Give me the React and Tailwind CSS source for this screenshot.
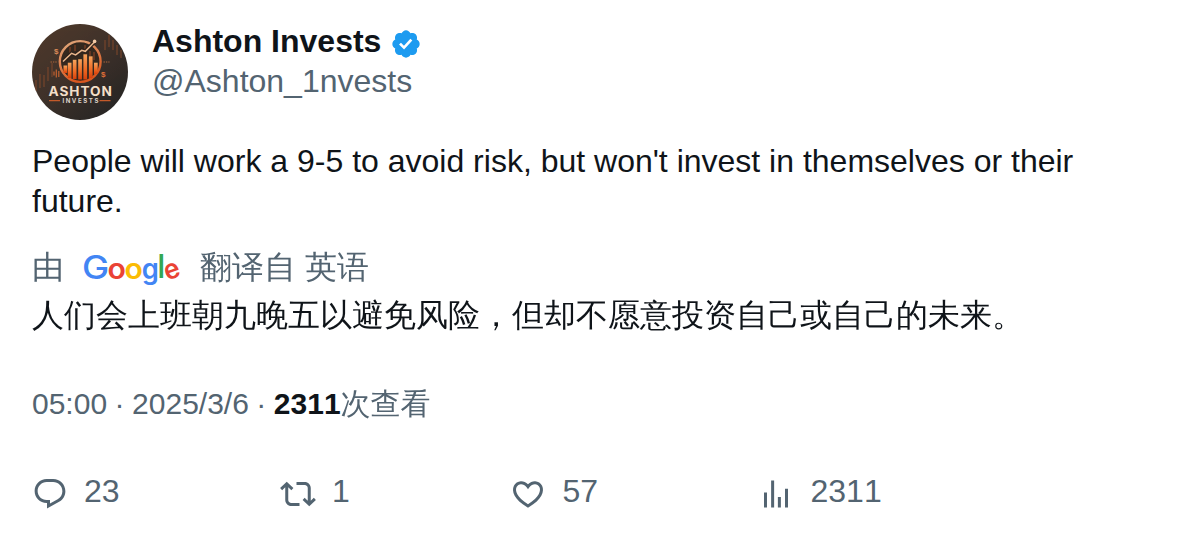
const REPLY =
  "M1.751 10c0-4.42 3.584-8 8.005-8h4.366c4.49 0 8.129 3.64 8.129 8.13 0 2.96-1.607 5.68-4.196 7.11l-8.054 4.46v-3.69h-.067c-4.49.1-8.183-3.51-8.183-8.01zm8.005-6c-3.317 0-6.005 2.69-6.005 6 0 3.37 2.77 6.08 6.138 6.01l.351-.01h1.761v2.3l5.087-2.81c1.951-1.08 3.163-3.13 3.163-5.36 0-3.39-2.744-6.13-6.129-6.13H9.756z";
const REPOST =
  "M4.5 3.88l4.432 4.14-1.364 1.46L5.5 7.55V16c0 1.1.896 2 2 2H13v2H7.5c-2.209 0-4-1.79-4-4V7.55L1.432 9.48.068 8.02 4.5 3.88zM16.5 6H11V4h5.5c2.209 0 4 1.79 4 4v8.45l2.068-1.93 1.364 1.46-4.432 4.14-4.432-4.14 1.364-1.46 2.068 1.93V8c0-1.1-.896-2-2-2z";
const LIKE =
  "M16.697 5.5c-1.222-.06-2.679.51-3.89 2.16l-.805 1.09-.806-1.09C9.984 6.01 8.526 5.44 7.304 5.5c-1.243.07-2.349.78-2.91 1.91-.552 1.12-.633 2.78.479 4.82 1.074 1.97 3.257 4.27 7.129 6.61 3.87-2.34 6.052-4.64 7.126-6.61 1.111-2.04 1.03-3.7.477-4.82-.561-1.13-1.666-1.84-2.908-1.91zm4.187 7.69c-1.351 2.48-4.001 5.12-8.379 7.67l-.503.3-.504-.3c-4.379-2.55-7.029-5.19-8.382-7.67-1.36-2.5-1.41-4.86-.514-6.67.887-1.79 2.647-2.91 4.601-3.01 1.651-.09 3.368.56 4.798 2.01 1.429-1.45 3.146-2.1 4.796-2.01 1.954.1 3.714 1.22 4.601 3.01.896 1.81.846 4.17-.514 6.67z";
const VIEWS =
  "M8.75 21V3h2v18h-2zM18 21V8.5h2V21h-2zM4 21l.004-10h2L6 21H4zm9.248 0v-7h2v7h-2z";
const VERIFIED =
  "M20.396 11c-.018-.646-.215-1.275-.57-1.816-.354-.54-.852-.972-1.438-1.246.223-.607.27-1.264.14-1.897-.131-.634-.437-1.218-.882-1.687-.47-.445-1.053-.75-1.687-.882-.633-.13-1.29-.083-1.897.14-.273-.587-.704-1.086-1.245-1.44S11.647 1.62 11 1.604c-.646.017-1.273.213-1.813.568s-.969.854-1.24 1.44c-.608-.223-1.267-.272-1.902-.14-.635.13-1.22.436-1.69.882-.445.47-.749 1.055-.878 1.688-.13.633-.08 1.29.144 1.896-.587.274-1.087.705-1.443 1.245-.356.54-.555 1.17-.574 1.817.02.647.218 1.276.574 1.817.356.54.856.972 1.443 1.245-.224.606-.274 1.263-.144 1.896.13.634.433 1.218.877 1.688.47.443 1.054.747 1.687.878.633.132 1.29.084 1.897-.136.274.586.705 1.084 1.246 1.439.54.354 1.17.551 1.816.569.647-.016 1.276-.213 1.817-.567s.972-.854 1.245-1.44c.604.239 1.266.296 1.903.164.636-.132 1.22-.447 1.68-.907.46-.46.776-1.044.908-1.681s.075-1.299-.165-1.903c.586-.274 1.084-.705 1.439-1.246.354-.54.551-1.17.569-1.816zM9.662 14.85l-3.429-3.428 1.293-1.302 2.072 2.072 4.4-4.794 1.347 1.246z";

const STATS = [
  { icon: REPLY, value: "23" },
  { icon: REPOST, value: "1" },
  { icon: LIKE, value: "57" },
  { icon: VIEWS, value: "2311" },
];

// Bars inside the emblem: [x, top, bottom]
const BARS = [
  [31.5, 41.5, 49],
  [35.8, 38.7, 54],
  [40.8, 35.8, 55],
  [46.2, 35.2, 55.5],
  [51.4, 30.3, 55.5],
  [56.9, 32.3, 54],
  [62, 38.7, 50],
];

function Avatar() {
  return (
    <svg viewBox="0 0 96 96" className="size-24 shrink-0 rounded-full">
      <defs>
        <linearGradient id="bg" x1="0" y1="0" x2="0.8" y2="1">
          <stop offset="0" stopColor="#503a2a" />
          <stop offset="0.5" stopColor="#40322a" />
          <stop offset="1" stopColor="#262524" />
        </linearGradient>
        <linearGradient id="bar" x1="0" y1="0" x2="0" y2="1">
          <stop offset="0" stopColor="#f7a45c" />
          <stop offset="0.6" stopColor="#ee6a24" />
          <stop offset="1" stopColor="#d8410c" />
        </linearGradient>
        <linearGradient id="ring" x1="0" y1="0" x2="0.4" y2="1">
          <stop offset="0" stopColor="#e0ab80" />
          <stop offset="1" stopColor="#d9571f" />
        </linearGradient>
      </defs>
      <rect width="96" height="96" fill="url(#bg)" />
      <path
        d="M4 56v11M8 50v14M12 51v12M16 43v14M20 39v14M73 16v10M77 11v12M81 16v10M85 21v10M89 26v8"
        stroke="#8a4b2c"
        strokeWidth="1.6"
        opacity="0.55"
      />
      <path d="M22 47.5v4M24.3 45.5v8M26.8 47v6" stroke="#c4622f" strokeWidth="1.2" />
      <path d="M18.5 38h6.5M71.5 38h6" stroke="#b0673d" strokeWidth="1.2" strokeDasharray="1.4 1" />
      <circle cx="48.2" cy="37.5" r="20.4" fill="#35281f" stroke="url(#ring)" strokeWidth="2.4" />
      <path d="M38 23v6M43 21v6M58 27v5M62 28v8M53 21v4" stroke="#8b4425" strokeWidth="1.6" opacity="0.7" />
      {BARS.map(([x, top, bottom]) => (
        <rect key={x} x={x} y={top} width="3.7" height={bottom - top} fill="url(#bar)" />
      ))}
      <path d="M31 37.5l8.6-8.2 4 1.6 6.1-4.6 3.6 1 9.4-9.6" fill="none" stroke="#30231c" strokeWidth="4" />
      <path d="M31 37.5l8.6-8.2 4 1.6 6.1-4.6 3.6 1 9.4-9.6" fill="none" stroke="#eab78c" strokeWidth="1.5" />
      <circle cx="62.6" cy="17.4" r="1.8" fill="#f3caa6" />
      <text x="22" y="29.5" fontFamily="Liberation Sans" fontSize="8" fontWeight="700" fill="#d98a58">$</text>
      <text x="69" y="52.5" fontFamily="Liberation Sans" fontSize="8" fontWeight="700" fill="#e07038">$</text>
      <text transform="translate(16.6 71.8) scale(1.08 1)" fontFamily="Inter" fontSize="12.6" fontWeight="700" fill="#f3dfc8" textLength="58.6" lengthAdjust="spacing">ASHTON</text>
      <text x="30.4" y="79.2" fontFamily="Inter" fontSize="6.1" fontWeight="700" fill="#ddd3c9" textLength="36" lengthAdjust="spacing">INVESTS</text>
      <path d="M17 76.6h11M67.5 76.6h11" stroke="#c45a2a" strokeWidth="1.1" />
    </svg>
  );
}

function GoogleLogo() {
  return (
    <svg viewBox="0 0 112 48" className="h-12 w-28" fontFamily="Inter, sans-serif" fontWeight="600" textAnchor="middle">
      <text transform="translate(20.6 35.5) scale(1.12 1)" fontSize="32.5" fontWeight="500" fill="#4285f4">G</text>
      <text transform="translate(41.8 35.6) scale(1.06 1)" fontSize="28.5" fill="#ea4335">o</text>
      <text transform="translate(58.7 35.6) scale(1.06 1)" fontSize="28.5" fill="#fbbc05">o</text>
      <text transform="translate(75.4 35.8) scale(0.96 1)" fontSize="28.5" fill="#4285f4">g</text>
      <text x="86.4" y="35.2" fontSize="32" fontWeight="500" fill="#34a853">l</text>
      <text transform="rotate(-20 96.8 27.8) translate(96.9 35.5) scale(0.96 1)" fontSize="27.5" fill="#ea4335">e</text>
    </svg>
  );
}

export default function App() {
  return (
    <main className="flex h-[538px] w-[1196px] flex-col overflow-hidden bg-white px-8 pt-[21px] font-['Liberation_Sans','WenQuanYi_Zen_Hei','Droid_Sans_Fallback','Noto_Sans_CJK_SC',sans-serif] text-[32px] leading-10 text-[#0f1419]">
      <header className="flex h-[120px] gap-6">
        <div className="pt-[3px]">
          <Avatar />
        </div>
        <div>
          <div className="flex h-10 gap-[9px] font-bold">
            <span>Ashton Invests</span>
            <svg viewBox="0 0 22 22" className="mt-[7px] size-8" fill="#1d9bf0">
              <path d={VERIFIED} />
            </svg>
          </div>
          <div className="text-[#536471]">@Ashton_1nvests</div>
        </div>
      </header>

      <p className="h-20">
        People will work a 9-5 to avoid risk, but won't invest in themselves or their future.
      </p>

      <div className="mt-[26px] flex h-10 items-center whitespace-pre text-[#536471]">
        <span>由</span>
        <span className="mr-[13px] ml-[11px]">
          <GoogleLogo />
        </span>
        <span>翻译自 英语</span>
      </div>
      <p className="mt-2 h-10 whitespace-nowrap">
        人们会上班朝九晚五以避免风险，但却不愿意投资自己或自己的未来。
      </p>

      <div className="mt-[49px] flex h-10 text-[30px] text-[#536471] [font-kerning:none]">
        <span>05:00</span>
        <span className="w-[25px] text-center">·</span>
        <span>2025/3/6</span>
        <span className="w-[25px] text-center">·</span>
        <span className="font-bold text-[#0f1419]">2311</span>
        <span>次查看</span>
      </div>

      <footer className="mt-[47px] flex h-10 gap-[160.5px] text-[#536471] [font-kerning:none]">
        {STATS.map(({ icon, value }) => (
          <div key={icon} className="flex gap-4">
            <svg viewBox="0 0 24 24" className="mt-[5px] size-9" fill="currentColor">
              <path d={icon} />
            </svg>
            <span>{value}</span>
          </div>
        ))}
      </footer>
    </main>
  );
}
